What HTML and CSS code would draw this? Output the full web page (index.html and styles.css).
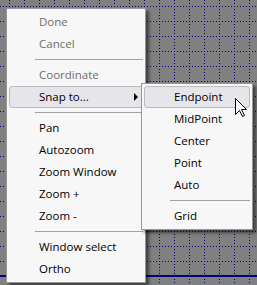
FILE: index.html
```html
<!doctype html>
<html lang="en">
  <head>
    <meta charset="UTF-8" />
    <title>Context menu</title>
    <link rel="stylesheet" href="styles.css">
  </head>
  <body>
    <div class="canvas">
      <!-- drawing area grid -->
      <svg class="grid" width="257" height="285">
        <defs>
          <pattern id="dots" width="15" height="15" patternUnits="userSpaceOnUse">
            <rect x="0" y="6" width="1" height="1" />
            <rect x="3" y="6" width="1" height="1" />
            <rect x="6" y="6" width="1" height="1" />
            <rect x="9" y="6" width="1" height="1" />
            <rect x="12" y="6" width="1" height="1" />
            <rect x="9" y="0" width="1" height="1" />
            <rect x="9" y="3" width="1" height="1" />
            <rect x="9" y="9" width="1" height="1" />
            <rect x="9" y="12" width="1" height="1" />
          </pattern>
        </defs>
        <rect width="257" height="285" fill="url(#dots)" />
        <rect class="axis" x="0" y="275" width="257" height="2" />
      </svg>

      <ul class="menu main-menu">
        <li class="item disabled">Done</li>
        <li class="item disabled">Cancel</li>
        <li class="sep"></li>
        <li class="item disabled">Coordinate</li>
        <li class="item active">Snap to...<span class="arrow"></span></li>
        <li class="sep"></li>
        <li class="item">Pan</li>
        <li class="item">Autozoom</li>
        <li class="item">Zoom Window</li>
        <li class="item">Zoom +</li>
        <li class="item">Zoom -</li>
        <li class="sep"></li>
        <li class="item">Window select</li>
        <li class="item">Ortho</li>
      </ul>

      <ul class="menu sub-menu">
        <li class="item active">Endpoint</li>
        <li class="item">MidPoint</li>
        <li class="item">Center</li>
        <li class="item">Point</li>
        <li class="item">Auto</li>
        <li class="sep"></li>
        <li class="item">Grid</li>
      </ul>

      <svg class="cursor" width="13" height="20" viewBox="0 0 13 20">
        <polygon points="0.5,0.5 0.5,16.5 4.5,12.5 7.5,18.5 9.5,17.5 6.5,11.5 11.5,11.5" />
      </svg>
    </div>
  </body>
</html>
```

FILE: styles.css
```css
body {
  margin: 0;
  background: #808080;
  font-family: "Open Sans", "Liberation Sans", sans-serif;
  font-size: 11.5px;
}
.canvas {
  position: relative;
  width: 257px;
  height: 285px;
  overflow: hidden;
}
.grid {
  display: block;
  fill: #000080;
}
.grid .axis {
  fill: #000080;
}
.menu {
  position: absolute;
  box-sizing: border-box;
  margin: 0;
  padding: 2px;
  list-style: none;
  background: #f7f7f7;
  border: 1px solid #979797;
  box-shadow: 3px 3px 3px rgba(0, 0, 0, .5);
}
.main-menu {
  left: 6px;
  top: 8px;
  width: 140px;
}
.sub-menu {
  left: 141px;
  top: 83px;
  width: 112px;
}
.item {
  position: relative;
  box-sizing: border-box;
  height: 22px;
  line-height: 19px;
  padding-left: 29px;
  color: #000;
  border: 1px solid transparent;
  border-radius: 3px;
  white-space: nowrap;
}
.item.disabled {
  color: #6d6d6d;
}
.item.active {
  background: #e6e6ea;
  border-color: #bcbcbc;
}
.sep {
  height: 1px;
  margin: 4px 0 4px 26px;
  background: #a0a0a0;
}
.arrow {
  position: absolute;
  right: 4px;
  top: 6px;
  width: 0;
  height: 0;
  border-left: 4px solid #000;
  border-top: 4px solid transparent;
  border-bottom: 4px solid transparent;
}
.cursor {
  position: absolute;
  left: 235px;
  top: 98px;
  fill: #fff;
  stroke: #000;
  stroke-width: 1;
}
```
